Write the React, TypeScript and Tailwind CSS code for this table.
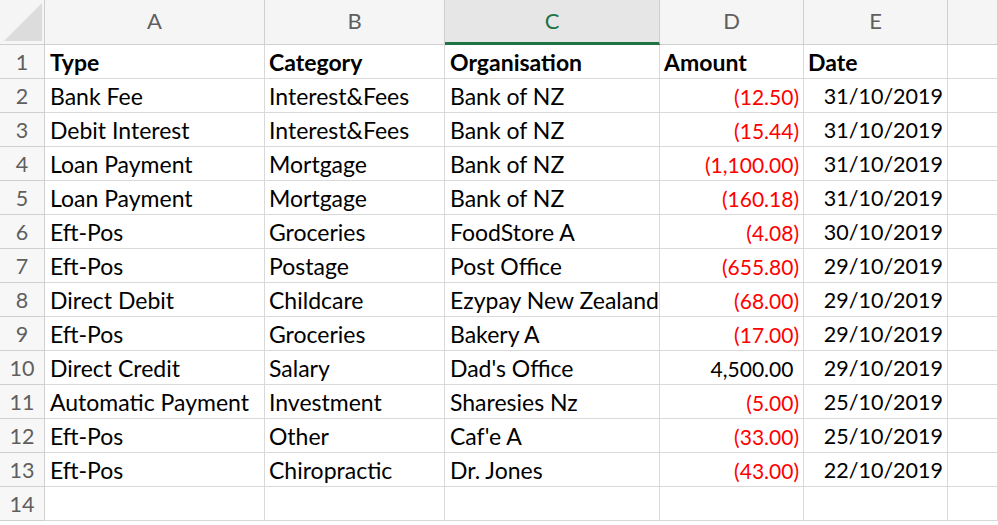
import React from "react";

type Row = {
  type: string;
  category: string;
  org: string;
  amount: string;
  negative: boolean;
  date: string;
};

const ROWS: Row[] = [
  { type: "Bank Fee", category: "Interest&Fees", org: "Bank of NZ", amount: "(12.50)", negative: true, date: "31/10/2019" },
  { type: "Debit Interest", category: "Interest&Fees", org: "Bank of NZ", amount: "(15.44)", negative: true, date: "31/10/2019" },
  { type: "Loan Payment", category: "Mortgage", org: "Bank of NZ", amount: "(1,100.00)", negative: true, date: "31/10/2019" },
  { type: "Loan Payment", category: "Mortgage", org: "Bank of NZ", amount: "(160.18)", negative: true, date: "31/10/2019" },
  { type: "Eft-Pos", category: "Groceries", org: "FoodStore A", amount: "(4.08)", negative: true, date: "30/10/2019" },
  { type: "Eft-Pos", category: "Postage", org: "Post Office", amount: "(655.80)", negative: true, date: "29/10/2019" },
  { type: "Direct Debit", category: "Childcare", org: "Ezypay New Zealand", amount: "(68.00)", negative: true, date: "29/10/2019" },
  { type: "Eft-Pos", category: "Groceries", org: "Bakery A", amount: "(17.00)", negative: true, date: "29/10/2019" },
  { type: "Direct Credit", category: "Salary", org: "Dad's Office", amount: "4,500.00", negative: false, date: "29/10/2019" },
  { type: "Automatic Payment", category: "Investment", org: "Sharesies Nz", amount: "(5.00)", negative: true, date: "25/10/2019" },
  { type: "Eft-Pos", category: "Other", org: "Caf'e A", amount: "(33.00)", negative: true, date: "25/10/2019" },
  { type: "Eft-Pos", category: "Chiropractic", org: "Dr. Jones", amount: "(43.00)", negative: true, date: "22/10/2019" },
];

const COLS = ["A", "B", "C", "D", "E", ""];

const grid = "grid grid-cols-[45px_220px_180px_215px_144px_144px_1fr]";
const cell = "h-[34px] border-r border-b border-[#d9d9d9] flex items-end leading-[1.35] overflow-hidden whitespace-nowrap";
const rowHead = "h-[34px] border-r border-b border-[#d0d0d0] bg-[#f7f7f7] flex items-end justify-center pb-[1px] leading-[1.35] text-[21.5px] text-[#5f5f5f]";

function Corner() {
  return (
    <div className="h-[45px] border-r border-b border-[#cfcfcf] bg-[#f5f5f5] relative">
      <svg className="absolute left-0 top-0" width="45" height="45" viewBox="0 0 45 45">
        <polygon points="42,3 42,41 4,41" fill="#dcdcdc" />
      </svg>
    </div>
  );
}

export default function App() {
  return (
    <div
      className="w-[998px] h-[525px] overflow-hidden bg-white text-[23px] text-black"
      style={{ fontFamily: "Lato, 'Open Sans', sans-serif" }}
    >
      {/* column letters */}
      <div className={grid}>
        <Corner />
        {COLS.map((c, i) =>
          c === "C" ? (
            <div
              key={i}
              className="h-[45px] border-r border-[#cfcfcf] bg-[#e6e6e6] border-b-[3px] border-b-[#217346] flex items-center justify-center pb-[2px] text-[22px] text-[#217346]"
            >
              {c}
            </div>
          ) : (
            <div
              key={i}
              className="h-[45px] border-r border-b border-[#cfcfcf] bg-[#f5f5f5] flex items-center justify-center pb-[4px] text-[22px] text-[#5f5f5f]"
            >
              {c}
            </div>
          )
        )}
      </div>

      {/* header row */}
      <div className={grid}>
        <div className={rowHead}>1</div>
        <div className={`${cell} pl-[5px] font-bold`}>Type</div>
        <div className={`${cell} pl-[4px] font-bold`}>Category</div>
        <div className={`${cell} pl-[5px] font-bold`}>Organisation</div>
        <div className={`${cell} pl-[4px] font-bold`}>Amount</div>
        <div className={`${cell} pl-[4px] font-bold`}>Date</div>
        <div className={cell} />
      </div>

      {ROWS.map((r, i) => (
        <div key={i} className={grid}>
          <div className={rowHead}>{i + 2}</div>
          <div className={`${cell} pl-[5px]`}>{r.type}</div>
          <div className={`${cell} pl-[4px]`}>{r.category}</div>
          <div className={`${cell} pl-[5px]`}>{r.org}</div>
          <div className={`${cell} justify-end pr-[4px] pb-[1px] text-[21px] ${r.negative ? "text-[#ff0000]" : ""}`}>
            {r.amount}
            {!r.negative && <span className="invisible">)</span>}
          </div>
          <div className={`${cell} justify-end pr-[4px] pb-[1px] text-[21.5px]`}>{r.date}</div>
          <div className={cell} />
        </div>
      ))}

      <div className={grid}>
        <div className={rowHead}>14</div>
        <div className={cell} />
        <div className={cell} />
        <div className={cell} />
        <div className={cell} />
        <div className={cell} />
        <div className={cell} />
      </div>
    </div>
  );
}
